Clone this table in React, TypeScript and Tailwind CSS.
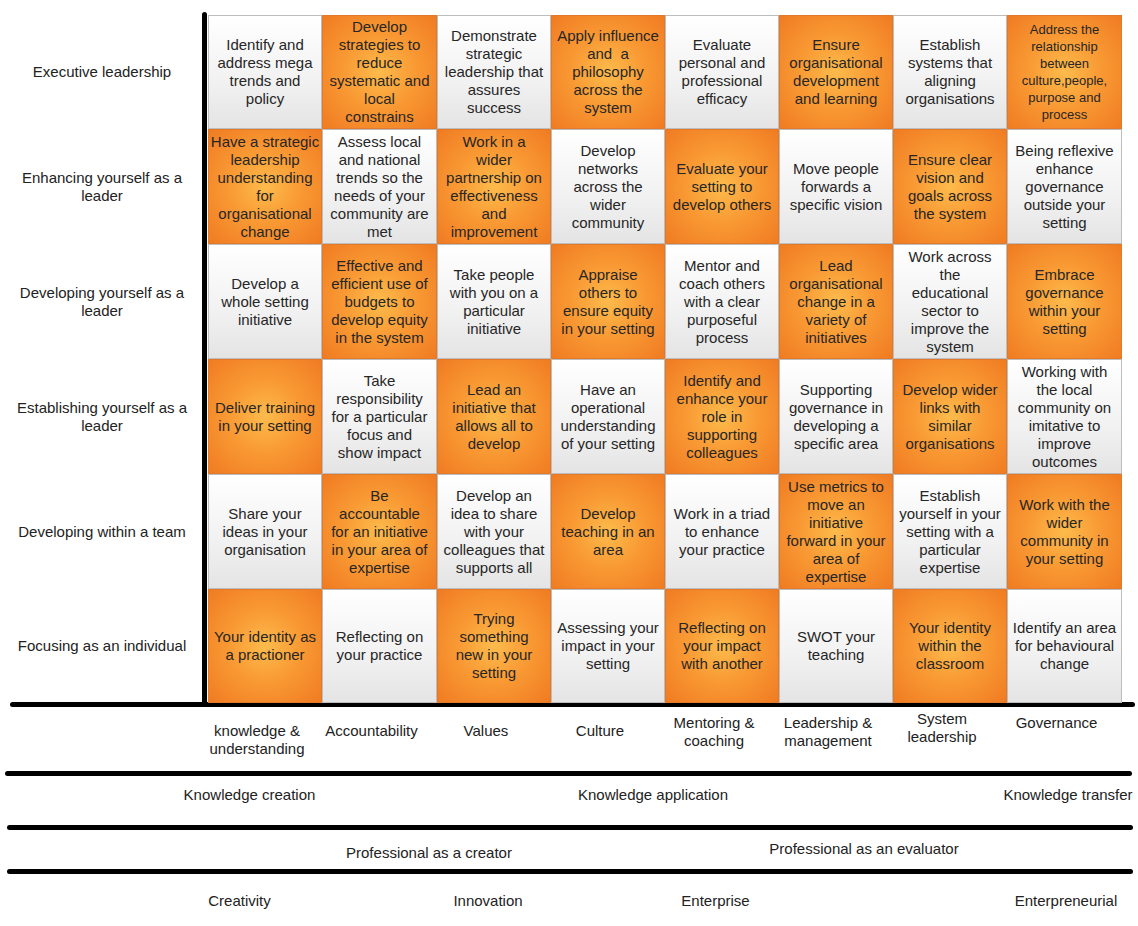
const rowLabels = [
  ['Executive leadership'],
  ['Enhancing yourself as a', 'leader'],
  ['Developing yourself as a', 'leader'],
  ['Establishing yourself as a', 'leader'],
  ['Developing within a team'],
  ['Focusing as an individual'],
];

const cells: string[][][] = [
  [
    ['Identify and', 'address mega', 'trends and', 'policy'],
    ['Develop', 'strategies to', 'reduce', 'systematic and', 'local', 'constrains'],
    ['Demonstrate', 'strategic', 'leadership that', 'assures', 'success'],
    ['Apply influence', 'and  a', 'philosophy', 'across the', 'system'],
    ['Evaluate', 'personal and', 'professional', 'efficacy'],
    ['Ensure', 'organisational', 'development', 'and learning'],
    ['Establish', 'systems that', 'aligning', 'organisations'],
    ['Address the', 'relationship', 'between', 'culture,people,', 'purpose and', 'process'],
  ],
  [
    ['Have a strategic', 'leadership', 'understanding', 'for', 'organisational', 'change'],
    ['Assess local', 'and national', 'trends so the', 'needs of your', 'community are', 'met'],
    ['Work in a', 'wider', 'partnership on', 'effectiveness', 'and', 'improvement'],
    ['Develop', 'networks', 'across the', 'wider', 'community'],
    ['Evaluate your', 'setting to', 'develop others'],
    ['Move people', 'forwards a', 'specific vision'],
    ['Ensure clear', 'vision and', 'goals across', 'the system'],
    ['Being reflexive', 'enhance', 'governance', 'outside your', 'setting'],
  ],
  [
    ['Develop a', 'whole setting', 'initiative'],
    ['Effective and', 'efficient use of', 'budgets to', 'develop equity', 'in the system'],
    ['Take people', 'with you on a', 'particular', 'initiative'],
    ['Appraise', 'others to', 'ensure equity', 'in your setting'],
    ['Mentor and', 'coach others', 'with a clear', 'purposeful', 'process'],
    ['Lead', 'organisational', 'change in a', 'variety of', 'initiatives'],
    ['Work across', 'the', 'educational', 'sector to', 'improve the', 'system'],
    ['Embrace', 'governance', 'within your', 'setting'],
  ],
  [
    ['Deliver training', 'in your setting'],
    ['Take', 'responsibility', 'for a particular', 'focus and', 'show impact'],
    ['Lead an', 'initiative that', 'allows all to', 'develop'],
    ['Have an', 'operational', 'understanding', 'of your setting'],
    ['Identify and', 'enhance your', 'role in', 'supporting', 'colleagues'],
    ['Supporting', 'governance in', 'developing a', 'specific area'],
    ['Develop wider', 'links with', 'similar', 'organisations'],
    ['Working with', 'the local', 'community on', 'imitative to', 'improve', 'outcomes'],
  ],
  [
    ['Share your', 'ideas in your', 'organisation'],
    ['Be', 'accountable', 'for an initiative', 'in your area of', 'expertise'],
    ['Develop an', 'idea to share', 'with your', 'colleagues that', 'supports all'],
    ['Develop', 'teaching in an', 'area'],
    ['Work in a triad', 'to enhance', 'your practice'],
    ['Use metrics to', 'move an', 'initiative', 'forward in your', 'area of', 'expertise'],
    ['Establish', 'yourself in your', 'setting with a', 'particular', 'expertise'],
    ['Work with the', 'wider', 'community in', 'your setting'],
  ],
  [
    ['Your identity as', 'a practioner'],
    ['Reflecting on', 'your practice'],
    ['Trying', 'something', 'new in your', 'setting'],
    ['Assessing your', 'impact in your', 'setting'],
    ['Reflecting on', 'your impact', 'with another'],
    ['SWOT your', 'teaching'],
    ['Your identity', 'within the', 'classroom'],
    ['Identify an area', 'for behavioural', 'change'],
  ],
];

const columnLabels = [
  { lines: ['knowledge &', 'understanding'], cls: 'mt-[15px]' },
  { lines: ['Accountability'], cls: 'mt-[15px]' },
  { lines: ['Values'], cls: 'mt-[15px]' },
  { lines: ['Culture'], cls: 'mt-[15px]' },
  { lines: ['Mentoring &', 'coaching'], cls: 'mt-[7px]' },
  { lines: ['Leadership &', 'management'], cls: 'mt-[7px]' },
  { lines: ['System', 'leadership'], cls: 'mt-[3px]' },
  { lines: ['Governance'], cls: 'mt-[7px]' },
];

const orange =
  'bg-[radial-gradient(circle_at_center,#fdbb4c_0%,#f99a34_45%,#f07b22_100%)] border border-[#e37a2a]';
const gray = 'bg-[linear-gradient(180deg,#ffffff_0%,#f1f1f1_60%,#e4e4e4_100%)] border border-[#bdbdbd]';

const Cell: React.FC<{ lines: string[]; hot: boolean; small?: boolean }> = ({ lines, hot, small }) => (
  <div
    className={`flex flex-col items-center justify-center overflow-visible text-center text-[#262626] ${
      small ? 'text-[13px] leading-[17px]' : 'text-[15px] leading-[18px]'
    } ${hot ? orange : gray}`}
  >
    {lines.map((l, i) => (
      <span key={i} className="whitespace-pre">
        {l}
      </span>
    ))}
  </div>
);

const Rule: React.FC<{ cls: string }> = ({ cls }) => <div className={`h-[5px] rounded-full bg-black ${cls}`} />;

export default function App() {
  return (
    <div className="w-[1138px] h-[926px] bg-white font-['Liberation_Sans',Arial,sans-serif] text-[15px] text-[#222] overflow-hidden">
      <div className="flex pt-[12px]">
        <div className="w-[202px] pt-[3px] grid grid-rows-[114px_115px_115px_115px_115px_114px]">
          {rowLabels.map((r, i) => (
            <div key={i} className="flex flex-col items-center justify-center text-center leading-[18px] pl-[2px]">
              {r.map((l) => (
                <span key={l} className="whitespace-nowrap">
                  {l}
                </span>
              ))}
            </div>
          ))}
        </div>
        <div className="w-[5px] rounded-t-full bg-black" />
        <div className="ml-[1px] pt-[3px] grid grid-cols-[114px_115px_114px_114px_114px_114px_114px_115px] grid-rows-[114px_115px_115px_115px_115px_114px]">
          {cells.map((row, r) =>
            row.map((lines, c) => (
              <Cell key={`${r}-${c}`} lines={lines} hot={(r + c) % 2 === 1} small={r === 0 && c === 7} />
            ))
          )}
        </div>
      </div>

      <Rule cls="ml-[10px] w-[1125px] -mt-[1px]" />

      <div className="h-[64px] ml-[200px] grid grid-cols-[114px_115px_114px_114px_114px_114px_114px_115px] leading-[18px]">
        {columnLabels.map((c, i) => (
          <div key={i} className={`flex flex-col items-center text-center ${c.cls}`}>
            {c.lines.map((l) => (
              <span key={l} className="whitespace-nowrap">
                {l}
              </span>
            ))}
          </div>
        ))}
      </div>

      <Rule cls="ml-[5px] w-[1127px]" />

      <div className="h-[49px] flex items-start pt-[10px] leading-[18px]">
        <div className="ml-[130px] w-[239px] text-center whitespace-nowrap">Knowledge creation</div>
        <div className="ml-[184px] w-[200px] text-center whitespace-nowrap">Knowledge application</div>
        <div className="ml-[245px] w-[140px] text-center whitespace-nowrap">Knowledge transfer</div>
      </div>

      <Rule cls="ml-[7px] w-[1126px]" />

      <div className="h-[39px] flex items-start leading-[18px]">
        <div className="ml-[309px] w-[240px] text-center whitespace-nowrap mt-[14px]">Professional as a creator</div>
        <div className="ml-[194px] w-[242px] text-center whitespace-nowrap mt-[10px]">Professional as an evaluator</div>
      </div>

      <Rule cls="ml-[7px] w-[1126px]" />

      <div className="flex items-start pt-[18px] leading-[18px]">
        <div className="ml-[180px] w-[119px] text-center whitespace-nowrap">Creativity</div>
        <div className="ml-[129px] w-[120px] text-center whitespace-nowrap">Innovation</div>
        <div className="ml-[108px] w-[119px] text-center whitespace-nowrap">Enterprise</div>
        <div className="ml-[231px] w-[120px] text-center whitespace-nowrap">Enterpreneurial</div>
      </div>
    </div>
  );
}
